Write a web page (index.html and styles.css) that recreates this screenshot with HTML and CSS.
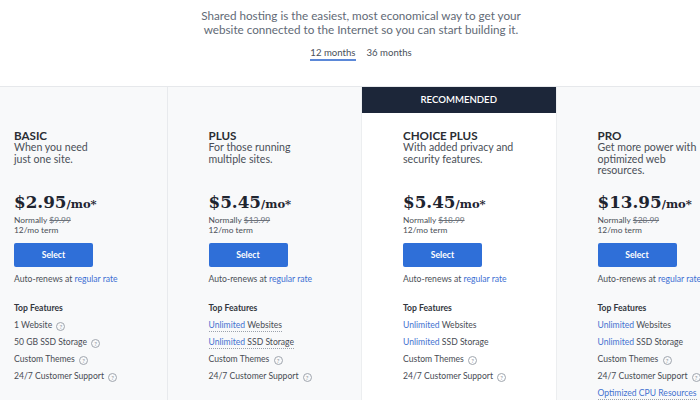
FILE: index.html
```html
<!DOCTYPE html>
<html>
<head>
<meta charset="utf-8">
<link rel="stylesheet" href="styles.css">
</head>
<body>
<div class="page">
  <section class="intro">
    <p class="lead">Shared hosting is the easiest, most economical way to get your<br>website connected to the Internet so you can start building it.</p>
    <div class="tabs">
      <span class="tab active">12 months</span>
      <span class="tab">36 months</span>
    </div>
  </section>
  <section class="plans">
    <div class="plan">
      <h2 class="name">BASIC</h2>
      <p class="desc">When you need<br>just one site.</p>
      <div class="price"><span class="amount">$2.95</span><span class="per">/mo*</span></div>
      <div class="normally">Normally <s>$9.99</s></div>
      <div class="term">12/mo term</div>
      <button class="select">Select</button>
      <div class="renew">Auto-renews at <a>regular rate</a></div>
      <div class="ftitle">Top Features</div>
      <ul class="features">
        <li>1 Website <span class="q">?</span></li>
        <li>50 GB SSD Storage <span class="q">?</span></li>
        <li>Custom Themes <span class="q">?</span></li>
        <li>24/7 Customer Support <span class="q">?</span></li>
      </ul>
    </div>
    <div class="plan">
      <h2 class="name">PLUS</h2>
      <p class="desc">For those running<br>multiple sites.</p>
      <div class="price"><span class="amount">$5.45</span><span class="per">/mo*</span></div>
      <div class="normally">Normally <s>$13.99</s></div>
      <div class="term">12/mo term</div>
      <button class="select">Select</button>
      <div class="renew">Auto-renews at <a>regular rate</a></div>
      <div class="ftitle">Top Features</div>
      <ul class="features">
        <li><span class="dotted"><span class="hl">Unlimited</span> Websites</span></li>
        <li><span class="dotted"><span class="hl">Unlimited</span> SSD Storage</span></li>
        <li>Custom Themes <span class="q">?</span></li>
        <li>24/7 Customer Support <span class="q">?</span></li>
      </ul>
    </div>
    <div class="plan recommended">
      <div class="ribbon">RECOMMENDED</div>
      <h2 class="name">CHOICE PLUS</h2>
      <p class="desc">With added privacy and<br>security features.</p>
      <div class="price"><span class="amount">$5.45</span><span class="per">/mo*</span></div>
      <div class="normally">Normally <s>$18.99</s></div>
      <div class="term">12/mo term</div>
      <button class="select">Select</button>
      <div class="renew">Auto-renews at <a>regular rate</a></div>
      <div class="ftitle">Top Features</div>
      <ul class="features">
        <li><span class="hl">Unlimited</span> Websites</li>
        <li><span class="hl">Unlimited</span> SSD Storage</li>
        <li>Custom Themes <span class="q">?</span></li>
        <li>24/7 Customer Support <span class="q">?</span></li>
      </ul>
    </div>
    <div class="plan">
      <h2 class="name">PRO</h2>
      <p class="desc">Get more power with<br>optimized web<br>resources.</p>
      <div class="price"><span class="amount">$13.95</span><span class="per">/mo*</span></div>
      <div class="normally">Normally <s>$28.99</s></div>
      <div class="term">12/mo term</div>
      <button class="select">Select</button>
      <div class="renew">Auto-renews at <a>regular rate</a></div>
      <div class="ftitle">Top Features</div>
      <ul class="features">
        <li><span class="hl">Unlimited</span> Websites</li>
        <li><span class="hl">Unlimited</span> SSD Storage</li>
        <li>Custom Themes <span class="q">?</span></li>
        <li>24/7 Customer Support <span class="q">?</span></li>
        <li><span class="dotted hl">Optimized CPU Resources</span></li>
      </ul>
    </div>
  </section>
</div>
</body>
</html>
```

FILE: styles.css
```css
html, body {
  margin: 0;
  padding: 0;
  overflow: hidden;
  background: #fff;
}
body {
  width: 700px;
  height: 400px;
  font-family: "Lato", "Liberation Sans", sans-serif;
  color: #3b3f47;
}
.page {
  width: 778px;
  margin-left: -28px;
}
.intro {
  text-align: center;
  padding: 8px 0 25px;
  border-bottom: 1px solid #e6e8eb;
}
.lead {
  margin: 0;
  font-size: 11.7px;
  line-height: 14px;
  color: #626a76;
}
.tabs {
  margin-top: 11px;
  display: flex;
  justify-content: center;
  gap: 11px;
}
.tab {
  font-size: 9.6px;
  line-height: 12px;
  color: #4a505a;
  border-bottom: 2px solid transparent;
}
.tab.active {
  border-bottom-color: #5b88d8;
}
.plans {
  display: grid;
  grid-template-columns: repeat(4, 194.5px);
  height: 320px;
}
.plan {
  position: relative;
  background: #f8f9fa;
  border-left: 1px solid #e8eaed;
  padding: 42px 20px 0 41px;
}
.plan:first-child {
  border-left: none;
  padding-left: 42px;
}
.plan.recommended {
  background: #fff;
  border-left: 1px solid #eceef0;
}
.plan.recommended + .plan {
  border-left: 1px solid #eceef0;
}
.ribbon {
  position: absolute;
  top: 0;
  left: 0;
  right: 0;
  height: 26px;
  line-height: 26px;
  background: #1c2639;
  color: #fff;
  text-align: center;
  font-size: 9.6px;
  font-weight: 600;
}
.name {
  margin: 0;
  font-size: 11.6px;
  line-height: 13px;
  font-weight: 700;
  color: #2a2d33;
}
.desc {
  margin: 0;
  height: 34.5px;
  font-size: 10.6px;
  line-height: 11.5px;
  color: #4a4f57;
}
.price {
  margin-top: 14px;
  height: 22px;
  line-height: 22px;
  font-family: "DejaVu Serif", "Liberation Serif", serif;
  font-weight: 700;
  color: #1f2530;
  white-space: nowrap;
}
.amount {
  font-size: 16.8px;
}
.per {
  font-size: 11.5px;
}
.normally, .term {
  font-size: 8.4px;
  line-height: 10px;
  color: #4a4f57;
}
.normally {
  margin-top: 2.5px;
}
.normally s {
  color: #6b717a;
}
.select {
  display: block;
  margin-top: 8px;
  width: 79px;
  height: 24px;
  border: none;
  border-radius: 2px;
  background: #2f6fd8;
  color: #fff;
  font-family: "Lato", "Liberation Sans", sans-serif;
  font-size: 8.6px;
  font-weight: 700;
  padding: 0;
}
.renew {
  margin-top: 6px;
  font-size: 8.6px;
  line-height: 12px;
  color: #4a4f57;
  white-space: nowrap;
}
.renew a {
  color: #3c6fd3;
}
.ftitle {
  margin-top: 17px;
  font-size: 8.6px;
  line-height: 12px;
  font-weight: 700;
  color: #33373e;
}
.features {
  list-style: none;
  margin: 2.5px 0 0;
  padding: 0;
}
.features li {
  font-size: 8.6px;
  line-height: 17px;
  height: 17px;
  color: #484c54;
  white-space: nowrap;
}
.hl {
  color: #4472d0;
}
.dotted {
  border-bottom: 1px dotted #9aa1ab;
  padding-bottom: 1px;
}
.q {
  display: inline-block;
  width: 7px;
  height: 7px;
  border: 1px solid #a0a6ae;
  border-radius: 50%;
  font-size: 6px;
  line-height: 7px;
  text-align: center;
  color: #8a9099;
  vertical-align: -1px;
  margin-left: 2px;
}
```
